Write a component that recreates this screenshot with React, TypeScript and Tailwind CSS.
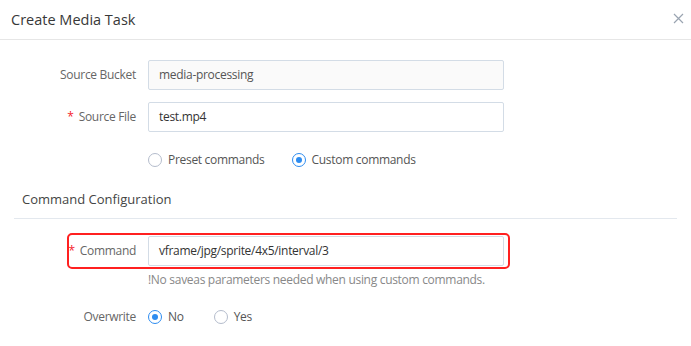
import React from "react";

function Radio({ checked, label }: { checked: boolean; label: string }) {
  return (
    <div className="flex items-center">
      <span
        className={
          checked
            ? "flex h-[14px] w-[14px] items-center justify-center rounded-full border border-[#2d8cf0] bg-white"
            : "flex h-[14px] w-[14px] items-center justify-center rounded-full border border-[#b4bccc] bg-white"
        }
      >
        {checked && <span className="h-[6px] w-[6px] rounded-full bg-[#2d8cf0]" />}
      </span>
      <span className="ml-[6px] text-[12px] tracking-[-0.3px] text-[#555]">{label}</span>
    </div>
  );
}

function Label({ text, required }: { text: string; required?: boolean }) {
  return (
    <div className="flex w-[136px] shrink-0 items-center justify-end text-[12px] tracking-[-0.3px] text-[#666]">
      {required && <span className="mr-[5px] text-[#f5222d]">*</span>}
      {text}
    </div>
  );
}

export default function App() {
  return (
    <div
      className="relative h-[346px] w-[691px] overflow-hidden bg-white"
      style={{ fontFamily: '"Open Sans", "Noto Sans", sans-serif' }}
    >
      <div className="flex h-[40px] items-center justify-between border-b border-[#e6e6e6] pl-[11px] pr-[7px]">
        <span className="text-[14.5px] text-[#383838]">Create Media Task</span>
        <svg width="11" height="11" viewBox="0 0 11 11" className="mb-[2px]">
          <path d="M1 1L10 10M10 1L1 10" stroke="#9aa4b1" strokeWidth="1.2" />
        </svg>
      </div>

      <div className="pt-[20px]">
        <div className="flex h-[30px]">
          <Label text="Source Bucket" />
          <div className="ml-[12px] flex w-[356px] items-center rounded-[2px] border border-[#d3dce6] bg-[#fafafa] pl-[10px] text-[12px] tracking-[-0.3px] text-[#555]">
            media-processing
          </div>
        </div>
        <div className="mt-[12px] flex h-[30px]">
          <Label text="Source File" required />
          <div className="ml-[12px] flex w-[356px] items-center rounded-[2px] border border-[#d3dce6] bg-white pl-[10px] text-[12px] tracking-[-0.3px] text-[#333]">
            test.mp4
          </div>
        </div>
        <div className="mt-[19px] flex h-[18px] items-center pl-[148px]">
          <Radio checked={false} label="Preset commands" />
          <div className="ml-[27px]">
            <Radio checked label="Custom commands" />
          </div>
        </div>

        <div className="mx-[14px] mt-[21px] border-b border-[#e3e8ee] pb-[8px] pl-[8px] text-[13px] text-[#444]">
          Command Configuration
        </div>

        <div className="relative mt-[17px] flex h-[30px]">
          <Label text="Command" required />
          <div className="ml-[12px] flex w-[356px] items-center rounded-[2px] border border-[#d3dce6] bg-white pl-[10px] text-[12px] tracking-[-0.3px] text-[#333]">
            vframe/jpg/sprite/4x5/interval/3
          </div>
          <div className="pointer-events-none absolute left-[67px] top-[-3px] h-[36px] w-[443px] rounded-[5px] border-2 border-[#ff2020]" />
        </div>
        <div className="mt-[5px] pl-[148px] text-[12px] tracking-[-0.3px] text-[#888]">
          !No saveas parameters needed when using custom commands.
        </div>

        <div className="mt-[19px] flex h-[18px] items-center">
          <Label text="Overwrite" />
          <div className="ml-[12px] flex items-center">
            <Radio checked label="No" />
            <div className="ml-[30px]">
              <Radio checked={false} label="Yes" />
            </div>
          </div>
        </div>
      </div>
    </div>
  );
}
